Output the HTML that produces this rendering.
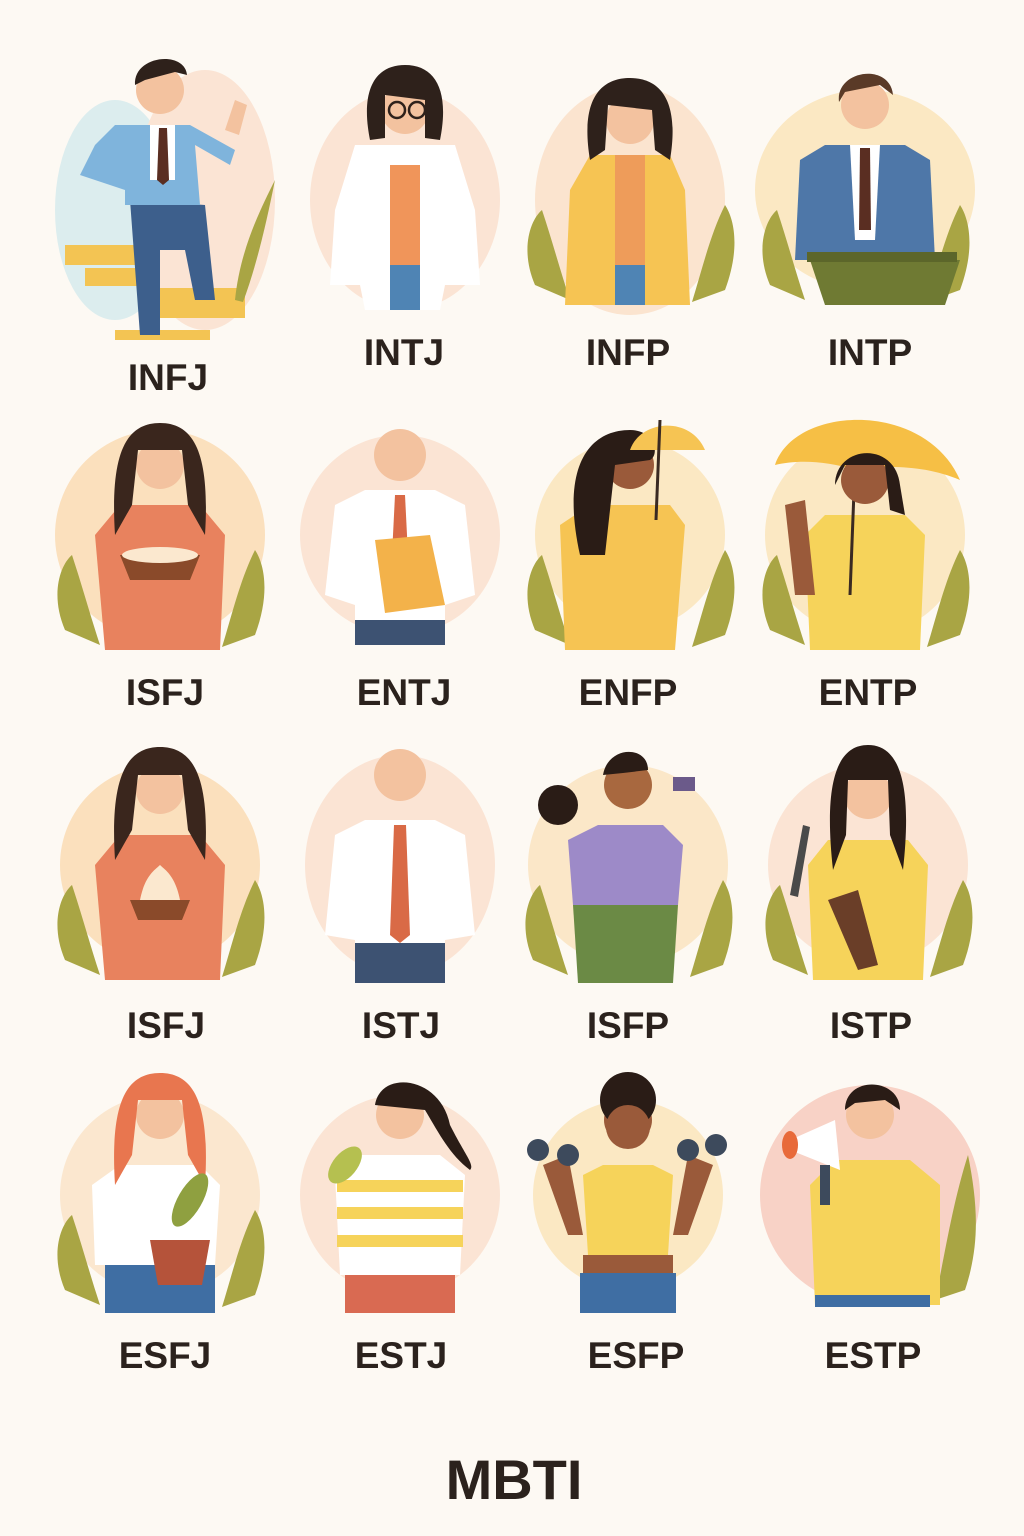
<!DOCTYPE html>
<html><head><meta charset="utf-8"><style>
html,body{margin:0;padding:0;background:#fdf9f3;}
svg{display:block}
text{font-family:"Liberation Sans",sans-serif;font-weight:bold;fill:#2b221d;text-anchor:middle}
</style></head><body>
<svg width="1024" height="1536" viewBox="0 0 1024 1536" xmlns="http://www.w3.org/2000/svg">
<defs>
<g id="leaves">
 <path d="M-95 95 C-110 60 -100 30 -88 20 C-78 50 -70 80 -60 110 Z" fill="#a9a544"/>
 <path d="M95 100 C110 60 105 30 95 15 C80 45 72 80 62 112 Z" fill="#a9a544"/>
</g>
</defs>
<rect width="1024" height="1536" fill="#fdf9f3"/>

<!-- Row 1 -->
<g transform="translate(165,190)">
 <ellipse cx="-50" cy="20" rx="60" ry="110" fill="#dcedee"/>
 <ellipse cx="40" cy="10" rx="70" ry="130" fill="#fbe4d4"/>
 <rect x="-100" y="55" width="70" height="20" fill="#f3c453"/>
 <rect x="-80" y="78" width="60" height="18" fill="#f3c453"/>
 <rect x="-10" y="98" width="90" height="30" fill="#f3c453"/>
 <rect x="-50" y="140" width="95" height="10" fill="#f3c453"/>
 <path d="M70 110 C75 60 95 20 110 -10 C100 40 90 80 78 112Z" fill="#a9a544"/>
 <path d="M-35 10 L-25 145 L-5 145 L-5 60 L20 60 L30 110 L50 110 L40 15 Z" fill="#3d5f8c"/>
 <path d="M-50 -65 L25 -65 L70 -40 L65 -25 L30 -45 L35 15 L-40 15 L-40 0 L-85 -15 L-70 -45 Z" fill="#7fb4dc"/>
 <rect x="-15" y="-65" width="25" height="55" fill="#fff"/>
 <path d="M-6 -62 L2 -62 L4 -10 L-2 -5 L-8 -10Z" fill="#5a2e22"/>
 <circle cx="-5" cy="-100" r="24" fill="#f3c29f"/>
 <path d="M-30 -105 C-32 -135 20 -140 22 -115 L10 -118 L-20 -110 Z" fill="#2e211b"/>
 <path d="M60 -60 l10 -30 l12 5 l-8 30Z" fill="#f3c29f"/>
</g>
<g transform="translate(405,190)">
 <ellipse cx="0" cy="10" rx="95" ry="110" fill="#fbe4d4"/>
 <path d="M-70 20 L-50 -45 L50 -45 L70 20 L75 95 L40 95 L35 120 L-40 120 L-45 95 L-75 95Z" fill="#ffffff"/>
 <rect x="-15" y="-25" width="30" height="100" fill="#f0955a"/>
 <rect x="-15" y="75" width="30" height="45" fill="#4f84b4"/>
 <circle cx="0" cy="-80" r="24" fill="#f3c29f"/>
 <path d="M-35 -50 C-45 -100 -30 -125 0 -125 C30 -125 45 -100 35 -50 L20 -52 L20 -90 L-20 -95 L-20 -52Z" fill="#2e211b"/>
 <circle cx="-8" cy="-80" r="8" fill="none" stroke="#2e211b" stroke-width="2.5"/>
 <circle cx="12" cy="-80" r="8" fill="none" stroke="#2e211b" stroke-width="2.5"/>
</g>
<g transform="translate(630,190)">
 <ellipse cx="0" cy="10" rx="95" ry="115" fill="#fbe4cf"/>
 <use href="#leaves"/>
 <path d="M-65 115 L-60 0 L-40 -35 L40 -35 L55 0 L60 115Z" fill="#f6c453"/>
 <rect x="-15" y="-35" width="30" height="150" fill="#ee9c5a"/>
 <rect x="-15" y="75" width="30" height="40" fill="#4f84b4"/>
 <circle cx="0" cy="-70" r="24" fill="#f3c29f"/>
 <path d="M-40 -30 C-50 -90 -30 -112 0 -112 C30 -112 50 -90 40 -30 L25 -40 L22 -80 L-22 -85 L-25 -40Z" fill="#2e211b"/>
</g>
<g transform="translate(865,190)">
 <ellipse cx="0" cy="0" rx="110" ry="100" fill="#fbe8c3"/>
 <use href="#leaves"/>
 <path d="M-70 70 L-65 -30 L-40 -45 L40 -45 L65 -30 L70 70Z" fill="#4e77a8"/>
 <path d="M-15 -45 L15 -45 L10 50 L-10 50Z" fill="#fff"/>
 <path d="M-5 -42 L5 -42 L6 40 L-6 40Z" fill="#5a2e22"/>
 <path d="M-55 70 L95 70 L80 115 L-40 115Z" fill="#6f7a33"/>
 <rect x="-58" y="62" width="150" height="10" fill="#5c662a"/>
 <circle cx="0" cy="-85" r="24" fill="#f3c29f"/>
 <path d="M-26 -88 C-30 -120 25 -128 28 -95 L15 -105 L-20 -98Z" fill="#5a3a27"/>
</g>

<!-- Row 2 -->
<g transform="translate(160,535)">
 <circle r="105" fill="#fbe0bd"/>
 <use href="#leaves"/>
 <path d="M-65 0 L-40 -30 L40 -30 L65 0 L60 115 L-55 115Z" fill="#e8825e"/>
 <path d="M-40 20 L40 20 L30 45 L-30 45Z" fill="#8a4a2a"/>
 <ellipse cx="0" cy="20" rx="38" ry="8" fill="#fbe8cf"/>
 <circle cx="0" cy="-70" r="24" fill="#f3c29f"/>
 <path d="M-45 0 C-50 -80 -35 -112 0 -112 C35 -112 50 -80 45 0 L28 -30 L22 -85 L-22 -85 L-28 -30Z" fill="#3a261d"/>
</g>
<g transform="translate(400,535)">
 <circle r="100" fill="#fbe4d4"/>
 <path d="M-75 60 L-65 -30 L-35 -45 L35 -45 L65 -30 L75 60 L45 70 L45 90 L-45 90 L-45 70Z" fill="#fff"/>
 <rect x="-45" y="85" width="90" height="25" fill="#3d5272"/>
 <path d="M-5 -40 L5 -40 L8 20 L-8 20Z" fill="#d96a46"/>
 <path d="M-25 5 L30 0 L45 70 L-15 78Z" fill="#f3b24a"/>
 <circle cx="0" cy="-80" r="26" fill="#f3c29f"/>
</g>
<g transform="translate(630,535)">
 <circle r="95" fill="#fbe8c3"/>
 <use href="#leaves"/>
 <path d="M-65 115 L-70 -10 L-40 -30 L40 -30 L55 -10 L45 115Z" fill="#f6c453"/>
 <circle cx="0" cy="-70" r="24" fill="#9a5a3a"/>
 <path d="M-50 20 C-70 -70 -40 -105 0 -105 C25 -105 30 -80 20 -75 L-15 -70 L-25 20Z" fill="#2a1c16"/>
 <path d="M0 -85 C10 -115 60 -120 75 -85Z" fill="#f6c453"/>
 <line x1="30" y1="-115" x2="26" y2="-15" stroke="#3a2a22" stroke-width="3"/>
</g>
<g transform="translate(865,535)">
 <circle r="100" fill="#fbe8c3"/>
 <use href="#leaves"/>
 <path d="M-55 115 L-60 0 L-40 -20 L40 -20 L60 0 L55 115Z" fill="#f6d35a"/>
 <path d="M-90 -70 C-70 -130 60 -135 95 -55 C60 -70 20 -70 -10 -65 C-40 -75 -70 -75 -90 -70Z" fill="#f6bf45"/>
 <line x1="-10" y1="-70" x2="-15" y2="60" stroke="#3a2a22" stroke-width="3"/>
 <circle cx="0" cy="-55" r="24" fill="#9a5a3a"/>
 <path d="M-30 -50 C-30 -90 30 -95 35 -50 L40 -20 L25 -25 L20 -70 L-20 -70Z" fill="#2a1c16"/>
 <path d="M-80 -30 L-60 -35 L-50 60 L-70 60Z" fill="#9a5a3a"/>
</g>

<!-- Row 3 -->
<g transform="translate(160,865)">
 <circle r="100" fill="#fbe0bd"/>
 <use href="#leaves"/>
 <path d="M-65 0 L-40 -30 L40 -30 L65 0 L60 115 L-55 115Z" fill="#e8825e"/>
 <path d="M-30 35 L30 35 L22 55 L-22 55Z" fill="#8a4a2a"/>
 <path d="M-20 35 C-15 10 -5 5 0 0 C5 5 15 10 20 35Z" fill="#fbe8cf"/>
 <circle cx="0" cy="-75" r="24" fill="#f3c29f"/>
 <path d="M-45 -5 C-50 -85 -35 -118 0 -118 C35 -118 50 -85 45 -5 L28 -35 L22 -90 L-22 -90 L-28 -35Z" fill="#3a261d"/>
</g>
<g transform="translate(400,865)">
 <ellipse rx="95" ry="110" fill="#fbe4d4"/>
 <path d="M-75 70 L-65 -30 L-35 -45 L35 -45 L65 -30 L75 70 L45 75 L45 80 L-45 80 L-45 75Z" fill="#fff"/>
 <rect x="-45" y="78" width="90" height="40" fill="#3d5272"/>
 <path d="M-6 -40 L6 -40 L10 70 L0 78 L-10 70Z" fill="#d96a46"/>
 <circle cx="0" cy="-90" r="26" fill="#f3c29f"/>
</g>
<g transform="translate(628,865)">
 <circle r="100" fill="#fbe7c8"/>
 <use href="#leaves"/>
 <path d="M-55 40 L-60 -25 L-30 -40 L35 -40 L55 -20 L50 40Z" fill="#9d8ac8"/>
 <path d="M-55 40 L50 40 L45 118 L-50 118Z" fill="#6b8a45"/>
 <circle cx="0" cy="-80" r="24" fill="#a8683f"/>
 <path d="M-25 -90 C-20 -120 20 -120 20 -95 L-5 -92Z" fill="#2a1c16"/>
 <circle cx="-70" cy="-60" r="20" fill="#2a1c16"/>
 <rect x="45" y="-88" width="22" height="14" fill="#6b5a8a"/>
</g>
<g transform="translate(868,865)">
 <circle r="100" fill="#fbe4d4"/>
 <use href="#leaves"/>
 <path d="M-55 115 L-60 0 L-40 -25 L40 -25 L60 0 L55 115Z" fill="#f6d35a"/>
 <circle cx="0" cy="-70" r="24" fill="#f3c29f"/>
 <path d="M-35 5 C-45 -85 -30 -120 0 -120 C30 -120 45 -85 35 5 L22 -30 L20 -85 L-20 -85 L-22 -30Z" fill="#2a1c16"/>
 <path d="M-40 35 L-10 25 L10 100 L-10 105Z" fill="#6a3e28"/>
 <path d="M-78 30 L-65 -40 L-58 -38 L-70 32Z" fill="#4a4a4a"/>
</g>

<!-- Row 4 -->
<g transform="translate(160,1195)">
 <circle r="100" fill="#fbe7cf"/>
 <use href="#leaves"/>
 <path d="M-65 70 L-68 -10 L-40 -30 L40 -30 L60 -10 L55 70Z" fill="#fff"/>
 <rect x="-55" y="70" width="110" height="48" fill="#3f6ea3"/>
 <circle cx="0" cy="-80" r="24" fill="#f3c29f"/>
 <path d="M-45 -10 C-50 -90 -35 -122 0 -122 C35 -122 50 -90 45 -10 L28 -40 L22 -95 L-22 -95 L-28 -40Z" fill="#e8764f"/>
 <path d="M-10 45 L50 45 L42 90 L-2 90Z" fill="#b5533a"/>
 <ellipse cx="30" cy="5" rx="12" ry="30" transform="rotate(30 30 5)" fill="#8fa040"/>
</g>
<g transform="translate(400,1195)">
 <circle r="100" fill="#fbe4d4"/>
 <path d="M-60 80 L-65 -20 L-40 -40 L40 -40 L65 -20 L60 80Z" fill="#fff"/>
 <rect x="-63" y="-15" width="126" height="12" fill="#f6d35a"/>
 <rect x="-63" y="12" width="126" height="12" fill="#f6d35a"/>
 <rect x="-63" y="40" width="126" height="12" fill="#f6d35a"/>
 <rect x="-55" y="80" width="110" height="38" fill="#d96a52"/>
 <circle cx="0" cy="-80" r="24" fill="#f3c29f"/>
 <path d="M-25 -90 C-20 -125 40 -120 50 -70 C65 -40 75 -30 70 -25 C50 -40 40 -60 25 -85Z" fill="#2a1c16"/>
 <ellipse cx="-55" cy="-30" rx="12" ry="22" transform="rotate(40 -55 -30)" fill="#b5c050"/>
</g>
<g transform="translate(628,1195)">
 <circle r="95" fill="#fbe8c3"/>
 <path d="M-40 60 L-45 -20 L-25 -30 L25 -30 L45 -20 L40 60Z" fill="#f6d35a"/>
 <rect x="-45" y="60" width="90" height="20" fill="#9a5a3a"/>
 <rect x="-48" y="78" width="96" height="40" fill="#3f6ea3"/>
 <path d="M-85 -30 L-60 -40 L-45 40 L-60 40Z" fill="#9a5a3a"/>
 <path d="M85 -30 L60 -40 L45 40 L60 40Z" fill="#9a5a3a"/>
 <circle cx="0" cy="-75" r="24" fill="#9a5a3a"/>
 <circle cx="0" cy="-95" r="28" fill="#2a1c16"/>
 <circle cx="0" cy="-68" r="22" fill="#9a5a3a"/>
 <circle cx="-90" cy="-45" r="11" fill="#3d4a5c"/>
 <circle cx="-60" cy="-40" r="11" fill="#3d4a5c"/>
 <circle cx="60" cy="-45" r="11" fill="#3d4a5c"/>
 <circle cx="88" cy="-50" r="11" fill="#3d4a5c"/>
</g>
<g transform="translate(870,1195)">
 <circle r="110" fill="#f8d2c6"/>
 <path d="M95 95 C110 50 108 10 98 -40 C82 10 75 60 65 105Z" fill="#a9a544"/>
 <path d="M-55 110 L-60 -10 L-35 -35 L40 -35 L70 -10 L70 110Z" fill="#f6d35a"/>
 <rect x="-55" y="100" width="115" height="12" fill="#3f6ea3"/>
 <circle cx="0" cy="-80" r="24" fill="#f3c29f"/>
 <path d="M-25 -85 C-25 -120 30 -118 30 -85 L15 -95 L-15 -92Z" fill="#2a1c16"/>
 <path d="M-80 -55 L-35 -75 L-30 -25 L-80 -45Z" fill="#fff"/>
 <ellipse cx="-80" cy="-50" rx="8" ry="14" fill="#e86a3a"/>
 <rect x="-50" y="-30" width="10" height="40" fill="#3d4a5c"/>
</g>

<text x="168" y="390" font-size="37">INFJ</text>
<text x="404" y="365" font-size="37">INTJ</text>
<text x="628" y="365" font-size="37">INFP</text>
<text x="870" y="365" font-size="37">INTP</text>
<text x="165" y="705" font-size="37">ISFJ</text>
<text x="404" y="705" font-size="37">ENTJ</text>
<text x="628" y="705" font-size="37">ENFP</text>
<text x="868" y="705" font-size="37">ENTP</text>
<text x="166" y="1038" font-size="37">ISFJ</text>
<text x="401" y="1038" font-size="37">ISTJ</text>
<text x="628" y="1038" font-size="37">ISFP</text>
<text x="871" y="1038" font-size="37">ISTP</text>
<text x="165" y="1368" font-size="37">ESFJ</text>
<text x="401" y="1368" font-size="37">ESTJ</text>
<text x="636" y="1368" font-size="37">ESFP</text>
<text x="873" y="1368" font-size="37">ESTP</text>
<text x="514" y="1499" font-size="56">MBTI</text>
</svg>
</body></html>
